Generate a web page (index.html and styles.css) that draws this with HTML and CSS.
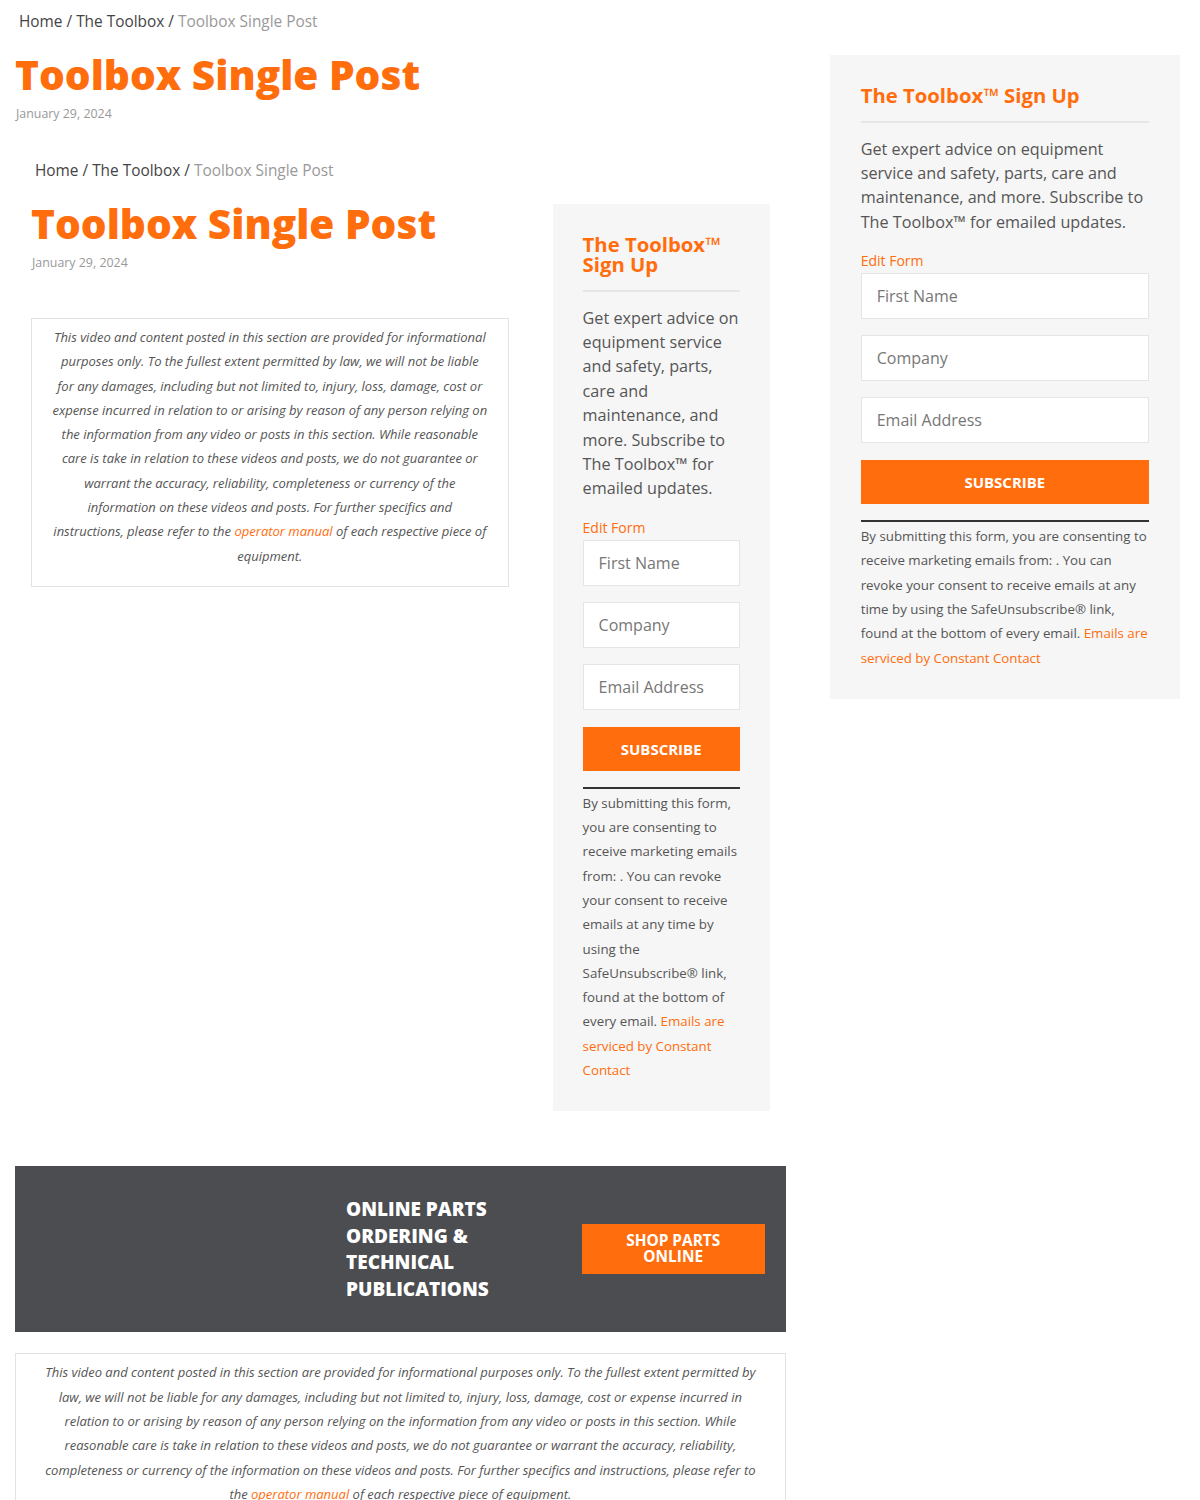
FILE: index.html
```html
<!DOCTYPE html>
<html lang="en">
<head>
<meta charset="utf-8">
<title>Toolbox Single Post</title>
<link rel="stylesheet" href="styles.css">
</head>
<body>
<div class="page">
  <div class="layout">
    <div class="main">
      <nav class="crumbs"><a href="#">Home</a> / <a href="#">The Toolbox</a> / <span class="current">Toolbox Single Post</span></nav>
      <h1 class="title">Toolbox Single Post</h1>
      <div class="date">January 29, 2024</div>

      <div class="nested">
        <div class="layout">
          <div class="main">
            <nav class="crumbs"><a href="#">Home</a> / <a href="#">The Toolbox</a> / <span class="current">Toolbox Single Post</span></nav>
            <h1 class="title">Toolbox Single Post</h1>
            <div class="date">January 29, 2024</div>
            <div class="notice notice--inner">
              <p>This video and content posted in this section are provided for informational purposes only. To the fullest extent permitted by law, we will not be liable for any damages, including but not limited to, injury, loss, damage, cost or expense incurred in relation to or arising by reason of any person relying on the information from any video or posts in this section. While reasonable care is take in relation to these videos and posts, we do not guarantee or warrant the accuracy, reliability, completeness or currency of the information on these videos and posts. For further specifics and instructions, please refer to the <a href="#">operator manual</a> of each respective piece of equipment.</p>
            </div>
          </div>
          <aside class="signup">
            <h3 class="signup-title">The Toolbox™ Sign Up</h3>
            <p class="signup-text">Get expert advice on equipment service and safety, parts, care and maintenance, and more. Subscribe to The Toolbox™ for emailed updates.</p>
            <a class="edit-form" href="#">Edit Form</a>
            <form class="signup-form">
              <input class="field" type="text" placeholder="First Name">
              <input class="field" type="text" placeholder="Company">
              <input class="field" type="email" placeholder="Email Address">
              <button class="subscribe" type="button">SUBSCRIBE</button>
            </form>
            <p class="consent">By submitting this form, you are consenting to receive marketing emails from: . You can revoke your consent to receive emails at any time by using the SafeUnsubscribe® link, found at the bottom of every email. <a href="#">Emails are serviced by Constant Contact</a></p>
          </aside>
        </div>
      </div>

      <section class="banner">
        <div class="banner-media"></div>
        <h2 class="banner-title">ONLINE PARTS ORDERING &amp; TECHNICAL PUBLICATIONS</h2>
        <a class="banner-btn" href="#">SHOP PARTS ONLINE</a>
      </section>

      <div class="notice notice--wide">
        <p>This video and content posted in this section are provided for informational purposes only. To the fullest extent permitted by law, we will not be liable for any damages, including but not limited to, injury, loss, damage, cost or expense incurred in relation to or arising by reason of any person relying on the information from any video or posts in this section. While reasonable care is take in relation to these videos and posts, we do not guarantee or warrant the accuracy, reliability, completeness or currency of the information on these videos and posts. For further specifics and instructions, please refer to the <a href="#">operator manual</a> of each respective piece of equipment.</p>
      </div>
    </div>

    <aside class="signup signup--main">
      <h3 class="signup-title">The Toolbox™ Sign Up</h3>
      <p class="signup-text">Get expert advice on equipment service and safety, parts, care and maintenance, and more. Subscribe to The Toolbox™ for emailed updates.</p>
      <a class="edit-form" href="#">Edit Form</a>
      <form class="signup-form">
        <input class="field" type="text" placeholder="First Name">
        <input class="field" type="text" placeholder="Company">
        <input class="field" type="email" placeholder="Email Address">
        <button class="subscribe" type="button">SUBSCRIBE</button>
      </form>
      <p class="consent">By submitting this form, you are consenting to receive marketing emails from: . You can revoke your consent to receive emails at any time by using the SafeUnsubscribe® link, found at the bottom of every email. <a href="#">Emails are serviced by Constant Contact</a></p>
    </aside>
  </div>
</div>
</body>
</html>
```

FILE: styles.css
```css
* { box-sizing: border-box; }

html, body {
  margin: 0;
  padding: 0;
  background: #fff;
}

body {
  font-family: "Open Sans", "Noto Sans", "Liberation Sans", sans-serif;
  color: #555;
  height: 1500px;
  overflow: hidden;
}

a { text-decoration: none; }

.page {
  padding: 0 20px 0 15px;
}

.layout {
  display: grid;
  grid-template-columns: 2.2fr 1fr;
  column-gap: 44px;
  align-items: start;
}

.main { min-width: 0; }

.crumbs {
  padding-top: 11px;
  font-size: 15.4px;
  line-height: 22px;
  color: #444;
  padding-left: 4px;
}

.crumbs a { color: #444; }
.crumbs .current { color: #999; }

.title {
  margin: 17.5px 0 0;
  font-size: 40.6px;
  line-height: 48px;
  font-weight: 800;
  color: #ff6d0d;
  letter-spacing: 0;
}

.date {
  margin-top: 6.5px;
  font-size: 12.4px;
  line-height: 18px;
  color: #999;
  padding-left: 1px;
}

.nested {
  margin: 26px 16px 0;
}

.notice {
  border: 1px solid #e3e3e3;
  background: #fff;
  text-align: center;
  font-style: italic;
  font-size: 13px;
  line-height: 24.3px;
  color: #555;
}

.notice p { margin: 0; }
.notice a { color: #ff6d0d; }

.notice--inner {
  margin-top: 46px;
  padding: 6px 20px 18px;
}

.notice--wide {
  margin-top: 21px;
  padding: 6px 28px 18px;
}

/* Sign up sidebar */
.signup {
  margin-top: 55px;
  background: #f6f6f6;
  padding: 30px 30px 29px;
  min-width: 0;
}

.signup--main {
  padding-left: 31px;
  padding-right: 31px;
}

.signup-title {
  margin: 0;
  font-size: 20.3px;
  line-height: 20px;
  font-weight: 700;
  color: #ff6d0d;
  padding-bottom: 16px;
  border-bottom: 2px solid #e6e6e6;
}

.signup-text {
  margin: 13.5px 0 0;
  font-size: 16.2px;
  line-height: 24.4px;
  color: #555;
}

.edit-form {
  display: block;
  margin-top: 17px;
  font-size: 14px;
  line-height: 20px;
  color: #ff6d0d;
}

.signup-form {
  display: flex;
  flex-direction: column;
  gap: 16px;
  margin: 2px 0 0;
}

.field {
  display: block;
  width: 100%;
  height: 46px;
  margin: 0;
  border: 1px solid #e5e5e5;
  background: #fff;
  padding: 0 15px;
  font-family: inherit;
  font-size: 16px;
  color: #555;
  outline: none;
}

.field::placeholder { color: #777; opacity: 1; }

.subscribe {
  display: block;
  width: 100%;
  height: 44px;
  margin-top: 1px;
  border: 0;
  background: #ff6d0d;
  color: #fff;
  font-family: inherit;
  font-size: 15px;
  font-weight: 700;
  cursor: pointer;
}

.consent {
  margin: 16px 0 0;
  padding-top: 2px;
  border-top: 2px solid #333;
  font-size: 13.3px;
  line-height: 24.3px;
  color: #555;
}

.consent a { color: #ff6d0d; }

/* Banner */
.banner {
  margin-top: 55px;
  background: #4c4d51;
  padding: 30px 21px;
  display: grid;
  grid-template-columns: 290px 1fr 183px;
  column-gap: 20px;
  align-items: center;
}

.banner-title {
  margin: 0;
  grid-column: 2;
  font-size: 19px;
  line-height: 26.5px;
  font-weight: 800;
  color: #fff;
}

.banner-btn {
  grid-column: 3;
  display: flex;
  align-items: center;
  justify-content: center;
  height: 50px;
  padding: 0 40px;
  background: #ff6d0d;
  color: #fff;
  text-align: center;
  font-size: 15.4px;
  line-height: 16px;
  font-weight: 700;
}
```
